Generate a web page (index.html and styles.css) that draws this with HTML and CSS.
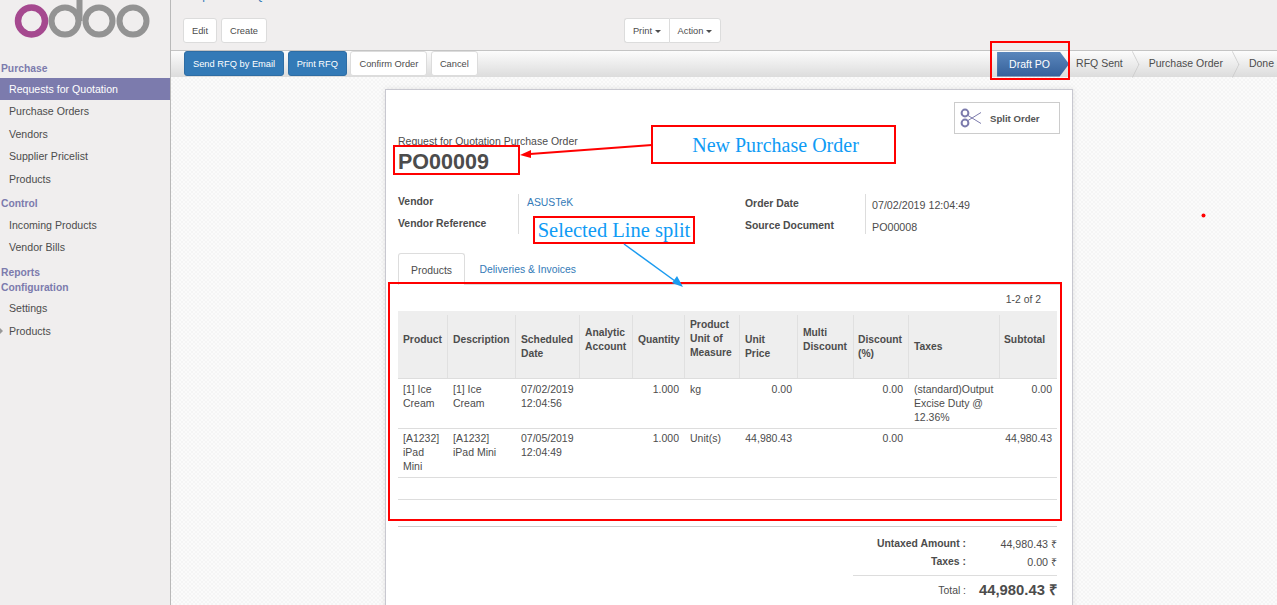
FILE: index.html
```html
<!DOCTYPE html>
<html lang="en">
<head>
  <meta charset="UTF-8" />
  <title>Requests for Quotation - Odoo</title>
  <link rel="stylesheet" href="styles.css">
</head>
<body>
  <div class="app">
    <!-- Left menu -->
    <aside class="sidebar">
      <div class="logo">
        <svg width="171" height="61" viewBox="0 0 171 61">
          <circle cx="31.500" cy="21" r="13.500" fill="none" stroke="#a5498f" stroke-width="6.500"/>
          <circle cx="65" cy="21" r="13.500" fill="none" stroke="#939393" stroke-width="6"/>
          <path d="M79.500 -2V21" fill="none" stroke="#939393" stroke-width="6"/>
          <circle cx="99" cy="21" r="13.500" fill="none" stroke="#939393" stroke-width="6"/>
          <circle cx="133" cy="21" r="13.500" fill="none" stroke="#939393" stroke-width="6"/>
        </svg>
      </div>
      <div class="menu-head">Purchase</div>
      <a class="menu-item active">Requests for Quotation</a>
      <a class="menu-item">Purchase Orders</a>
      <a class="menu-item">Vendors</a>
      <a class="menu-item">Supplier Pricelist</a>
      <a class="menu-item">Products</a>
      <div class="menu-head">Control</div>
      <a class="menu-item">Incoming Products</a>
      <a class="menu-item">Vendor Bills</a>
      <div class="menu-head reports">Reports</div>
      <div class="menu-head">Configuration</div>
      <a class="menu-item">Settings</a>
      <a class="menu-item has-sub">Products</a>
    </aside>

    <main class="main">
      <div class="control-panel">
        <div class="crumb">Requests for Quotation / Purchase Order</div>
        <div class="cp-buttons">
          <div class="btn-pair">
            <button class="btn">Edit</button>
            <button class="btn">Create</button>
          </div>
          <div class="btn-group">
            <button class="btn">Print <i class="caret"></i></button>
            <button class="btn">Action <i class="caret"></i></button>
          </div>
        </div>
      </div>

      <div class="statusbar">
        <div class="status-actions">
          <button class="btn primary">Send RFQ by Email</button>
          <button class="btn primary">Print RFQ</button>
          <button class="btn">Confirm Order</button>
          <button class="btn">Cancel</button>
        </div>
        <div class="steps">
          <span class="step current">Draft PO</span>
          <span class="step">RFQ Sent</span>
          <span class="step">Purchase Order</span>
          <span class="step last">Done</span>
        </div>
      </div>

      <div class="sheet-area">
        <div class="sheet">
          <div class="sheet-top">
            <button class="split-btn">
              <svg width="22" height="20" viewBox="0 0 22 20">
                <circle cx="5" cy="5" r="3.400" fill="none" stroke="#7c7bad" stroke-width="2"/>
                <circle cx="5" cy="15" r="3.400" fill="none" stroke="#7c7bad" stroke-width="2"/>
                <path d="M8 7.500 21 15.500M8 12.500 21 4.500" fill="none" stroke="#7c7bad" stroke-width="1"/>
              </svg>
              Split Order
            </button>
          </div>
          <div class="doc-label">Request for Quotation Purchase Order</div>
          <h1 class="doc-name">PO00009</h1>

          <div class="fields">
            <div class="field-col left">
              <div class="labels">
                <div class="f-label">Vendor</div>
                <div class="f-label">Vendor Reference</div>
              </div>
              <div class="values"><a class="link">ASUSTeK</a></div>
            </div>
            <div class="field-col right">
              <div class="labels">
                <div class="f-label">Order Date</div>
                <div class="f-label">Source Document</div>
              </div>
              <div class="values">
                <div>07/02/2019 12:04:49</div>
                <div>PO00008</div>
              </div>
            </div>
          </div>

          <div class="tabs">
            <span class="tab active">Products</span>
            <span class="tab">Deliveries &amp; Invoices</span>
          </div>

          <div class="pager">1-2 of 2</div>
          <table class="lines">
            <colgroup>
              <col><col><col><col><col><col><col><col><col><col><col>
            </colgroup>
            <thead>
              <tr>
                <th>Product</th>
                <th>Description</th>
                <th>Scheduled Date</th>
                <th class="up">Analytic Account</th>
                <th>Quantity</th>
                <th class="top">Product Unit of Measure</th>
                <th>Unit Price</th>
                <th class="up">Multi Discount</th>
                <th>Discount (%)</th>
                <th class="low">Taxes</th>
                <th>Subtotal</th>
              </tr>
            </thead>
            <tbody>
              <tr class="row-a">
                <td>[1] Ice Cream</td>
                <td>[1] Ice Cream</td>
                <td>07/02/2019 12:04:56</td>
                <td></td>
                <td class="num">1.000</td>
                <td>kg</td>
                <td class="num">0.00</td>
                <td></td>
                <td class="num">0.00</td>
                <td>(standard)Output Excise Duty @ 12.36%</td>
                <td class="num">0.00</td>
              </tr>
              <tr class="row-b">
                <td>[A1232] iPad Mini</td>
                <td>[A1232] iPad Mini</td>
                <td>07/05/2019 12:04:49</td>
                <td></td>
                <td class="num">1.000</td>
                <td>Unit(s)</td>
                <td class="num">44,980.43</td>
                <td></td>
                <td class="num">0.00</td>
                <td></td>
                <td class="num">44,980.43</td>
              </tr>
              <tr class="row-empty"><td colspan="11"></td></tr>
            </tbody>
          </table>
          <div class="table-foot"></div>

          <div class="totals">
            <div class="t-row"><span class="t-label">Untaxed Amount :</span><span class="t-val">44,980.43 ₹</span></div>
            <div class="t-row"><span class="t-label">Taxes :</span><span class="t-val">0.00 ₹</span></div>
            <div class="t-row grand"><span class="t-label">Total :</span><span class="t-val">44,980.43 ₹</span></div>
          </div>
        </div>
      </div>
    </main>
  </div>

  <!-- Annotations drawn on top of the screenshot -->
  <div class="mark mark-draft"></div>
  <div class="mark mark-po"></div>
  <div class="mark mark-table"></div>
  <div class="note note-new">New Purchase Order</div>
  <div class="note note-line">Selected Line split</div>
  <svg class="arrows" width="1277" height="605" viewBox="0 0 1277 605">
    <path d="M652 145 530 154" stroke="#f00" stroke-width="2" fill="none"/>
    <path d="M520 155 531 150 531 158Z" fill="#f00"/>
    <path d="M624 244 675 281" stroke="#1a9bf0" stroke-width="1.500" fill="none"/>
    <path d="M683 287 672 283 677 276Z" fill="#1a9bf0"/>
    <circle cx="1203.500" cy="215.500" r="2" fill="#f00"/>
  </svg>
</body>
</html>
```

FILE: styles.css
```css
* {
  box-sizing: border-box;
}

html, body {
  height: 605px;
  overflow: hidden;
}

body {
  margin: 0;
  position: relative;
  background: #f0eeee;
  color: #4c4c4c;
  font-family: "Liberation Sans", Arial, sans-serif;
  font-size: 10.400px;
  line-height: 14px;
}

.app {
  display: flex;
  height: 605px;
}

/* Sidebar */
.sidebar {
  width: 171px;
  flex: none;
  border-right: 1px solid #b9b9b9;
  background: #f0eeee;
}

.logo {
  height: 61px;
  overflow: hidden;
}

.logo svg {
  display: block;
}

.menu-head {
  height: 15px;
  margin-bottom: 2.900px;
  padding-left: 1px;
  color: #7c7bad;
  font-weight: bold;
  font-size: 10.300px;
  line-height: 15px;
}

.logo + .menu-head {
  margin-bottom: 1.900px;
}

.menu-item {
  display: block;
  height: 22.500px;
  padding-left: 9px;
  color: #4c4c4c;
  font-size: 10.600px;
  line-height: 22px;
}

.menu-item.active {
  background: #7c7bad;
  color: #fff;
}

.menu-item + .menu-head {
  margin-top: 5.600px;
}

.menu-item + .menu-head.reports {
  margin-top: 6px;
  margin-bottom: 0;
}

.reports + .menu-head {
  margin-bottom: 2.500px;
}

.has-sub {
  position: relative;
}

.has-sub::before {
  content: "";
  position: absolute;
  left: 0;
  top: 8px;
  border-left: 3px solid #999;
  border-top: 3px solid transparent;
  border-bottom: 3px solid transparent;
}

/* Main column */
.main {
  flex: 1;
  min-width: 0;
  display: flex;
  flex-direction: column;
}

.control-panel {
  height: 51px;
  padding-left: 12px;
  border-bottom: 1px solid #c4c4c4;
  overflow: hidden;
}

.crumb {
  height: 18px;
  margin-top: -12px;
  color: #337ab7;
  font-size: 12px;
  line-height: 14px;
}

.cp-buttons {
  display: flex;
  margin-top: 12px;
  width: 538px;
  justify-content: space-between;
}

.btn-pair {
  display: flex;
  gap: 4px;
}

.btn-group {
  display: flex;
}

.btn {
  height: 25px;
  padding: 0 8px;
  border: 1px solid #dcdcdc;
  border-radius: 3px;
  background: #fff;
  color: #4c4c4c;
  font-family: inherit;
  font-size: 9.300px;
}

.btn-group .btn:first-child {
  border-radius: 3px 0 0 3px;
  border-right: 0;
}

.btn-group .btn:last-child {
  border-radius: 0 3px 3px 0;
}

.btn.primary {
  background: #337ab7;
  border-color: #2e6da4;
  color: #fff;
}

.caret {
  display: inline-block;
  vertical-align: middle;
  border-top: 3px solid #4c4c4c;
  border-left: 3px solid transparent;
  border-right: 3px solid transparent;
}

/* Status bar */
.statusbar {
  height: 26px;
  flex: none;
  display: flex;
  justify-content: space-between;
  padding-left: 13px;
  background: linear-gradient(#fcfcfc, #dcdcdc);
}

.status-actions {
  display: flex;
  gap: 3.500px;
}

.steps {
  display: flex;
  align-items: center;
  color: #4c4c4c;
}

.step {
  position: relative;
  height: 26px;
  padding: 0 13px;
  line-height: 24px;
  font-size: 10.500px;
  white-space: nowrap;
}

.step.last {
  padding-right: 3px;
}

.step:not(.last):not(.current)::after {
  content: "";
  position: absolute;
  right: -6px;
  top: 4px;
  width: 18px;
  height: 18px;
  border-top: 1px solid #c8c8c8;
  border-right: 1px solid #c8c8c8;
  transform: scaleX(.5) rotate(45deg);
}

.step.current {
  width: 72px;
  height: 25px;
  padding-left: 12px;
  color: #fff;
  background: linear-gradient(#5a86bc, #356099);
  clip-path: polygon(0 0, 87% 0, 100% 50%, 87% 100%, 0 100%);
}

.step:nth-child(2) {
  padding-left: 7px;
}

/* Sheet */
.sheet-area {
  flex: 1;
  min-height: 0;
  padding-top: 12px;
  background-color: #f9f9f9;
  background-image: conic-gradient(#f5f5f5 25%, #fbfbfb 0 50%, #f5f5f5 0 75%, #fbfbfb 0);
  background-size: 4px 4px;
  overflow: hidden;
}

.sheet {
  width: 688px;
  height: 600px;
  margin-left: 214px;
  padding: 0 12px;
  background: #fff;
  border: 1px solid #c8c8d0;
  border-bottom: 0;
  box-shadow: 0 0 6px rgba(0, 0, 0, .1);
}

.sheet-top {
  display: flex;
  justify-content: flex-end;
  height: 45px;
  padding-top: 12px;
}

.split-btn {
  display: flex;
  align-items: center;
  gap: 8px;
  width: 106px;
  height: 32px;
  padding: 0 0 0 5px;
  border: 1px solid #ccc;
  background: #fff;
  color: #555;
  font-family: inherit;
  font-size: 9.600px;
  font-weight: bold;
}

.doc-label {
  font-size: 10.500px;
  line-height: 13px;
}

.doc-name {
  margin: 0;
  font-size: 21.500px;
  line-height: 28px;
  font-weight: bold;
}

.fields {
  display: flex;
  margin-top: 18px;
}

.field-col {
  display: flex;
  height: 40px;
}

.field-col.left {
  width: 347px;
}

.labels {
  width: 121px;
  border-right: 1px solid #ddd;
}

.f-label {
  height: 22px;
  font-weight: bold;
  line-height: 16px;
}

.right .f-label {
  position: relative;
  top: 2px;
}

.values {
  padding-left: 6px;
  font-size: 10.700px;
  line-height: 22px;
}

.left .values {
  padding: 2px 0 0 8px;
  font-size: 10.400px;
  line-height: 14px;
}

.link {
  color: #337ab7;
}

/* Tabs */
.tabs {
  display: flex;
  height: 32px;
  margin-top: 19px;
  border-bottom: 1px solid #ddd;
}

.tab {
  height: 32px;
  padding: 0 14.500px;
  line-height: 33px;
  color: #337ab7;
}

.tab.active {
  padding: 0 12px;
  color: #4c4c4c;
  background: #fff;
  border: 1px solid #ddd;
  border-bottom: 0;
  border-radius: 3px 3px 0 0;
}

.pager {
  height: 26px;
  padding-right: 19px;
  text-align: right;
  line-height: 30px;
}

/* Order lines */
.lines {
  width: 659px;
  table-layout: fixed;
  border-collapse: collapse;
  font-size: 10.300px;
  line-height: 14px;
}

.lines col:nth-child(1) { width: 49px; }
.lines col:nth-child(2) { width: 68px; }
.lines col:nth-child(3) { width: 64px; }
.lines col:nth-child(4) { width: 53px; }
.lines col:nth-child(5) { width: 52px; }
.lines col:nth-child(6) { width: 55px; }
.lines col:nth-child(7) { width: 58px; }
.lines col:nth-child(8) { width: 56px; }
.lines col:nth-child(9) { width: 55px; }
.lines col:nth-child(10) { width: 91px; }
.lines col:nth-child(11) { width: 58px; }

.lines th {
  position: relative;
  height: 67px;
  padding: 22px 5px 0 6px;
  background: #eee;
  border-bottom: 1px solid #ddd;
  text-align: left;
  vertical-align: top;
  font-weight: bold;
}

/* column divider stops short of the header top */
.lines th::after {
  content: "";
  position: absolute;
  z-index: 1;
  right: -1px;
  top: 4px;
  bottom: 0;
  width: 1px;
  background: #e0e0e0;
}

.lines th:last-child::after {
  display: none;
}

.lines th.top {
  padding-top: 7px;
}

.lines th.up {
  padding-top: 15px;
}

.lines th.low {
  padding-top: 29px;
}

.lines td {
  padding: 2px 5px 0 6px;
  font-size: 10.500px;
  vertical-align: top;
  border-bottom: 1px solid #ddd;
}

.lines tr > :nth-child(1),
.lines tr > :nth-child(9),
.lines tr > :nth-child(11) {
  padding-left: 5px;
}

.lines td.num {
  text-align: right;
}

.row-a td {
  height: 50px;
  padding-top: 3px;
}

.row-b td {
  height: 49px;
}

.row-empty td {
  height: 22px;
}

.table-foot {
  width: 659px;
  height: 27px;
  border-bottom: 1px solid #ccc;
}

/* Totals */
.totals {
  width: 204px;
  margin-left: 455px;
  padding-top: 8px;
}

.t-row {
  display: flex;
  justify-content: flex-end;
  height: 18px;
  line-height: 18px;
}

.t-label {
  font-weight: bold;
  padding-right: 13px;
}

.t-val {
  width: 78px;
  font-size: 10.700px;
  text-align: right;
}

.t-row.grand {
  height: 30px;
  margin-top: 4px;
  border-top: 1px solid #ddd;
  line-height: 29px;
}

.grand .t-label {
  font-weight: normal;
}

.grand .t-val {
  font-size: 14.800px;
  font-weight: bold;
  white-space: nowrap;
}

/* Annotations */
.mark, .note {
  position: absolute;
  border: 2px solid #f00;
}

.mark-draft {
  left: 990px;
  top: 41px;
  width: 80px;
  height: 39px;
}

.mark-po {
  left: 393px;
  top: 145px;
  width: 127px;
  height: 30px;
}

.mark-table {
  left: 388px;
  top: 282px;
  width: 674px;
  height: 239px;
}

.note {
  background: #fff;
  color: #0f9bf5;
  font-family: "Liberation Serif", "Times New Roman", serif;
  font-size: 20px;
  text-align: center;
}

.note-new {
  left: 651px;
  top: 125px;
  width: 245px;
  height: 39px;
  padding-left: 4px;
  line-height: 37px;
}

.note-line {
  left: 533px;
  top: 216px;
  width: 162px;
  height: 28px;
  font-size: 20.500px;
  line-height: 25px;
}

.arrows {
  position: absolute;
  left: 0;
  top: 0;
  pointer-events: none;
}
```
